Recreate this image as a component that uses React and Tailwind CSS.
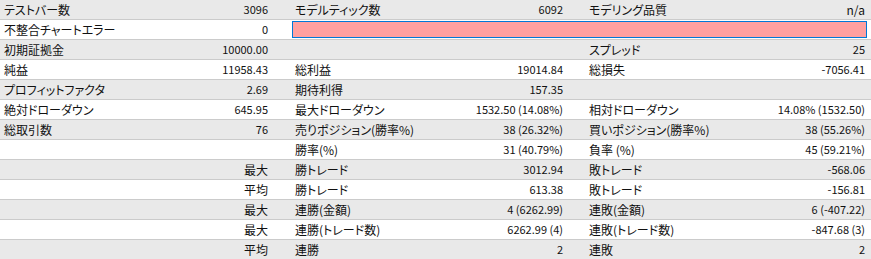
import React from "react";

const rows = [
  ["テストバー数", "3096", "モデルティック数", "6092", "モデリング品質", "n/a"],
  ["不整合チャートエラー", "0", null],
  ["初期証拠金", "10000.00", "", "", "スプレッド", "25"],
  ["純益", "11958.43", "総利益", "19014.84", "総損失", "-7056.41"],
  ["プロフィットファクタ", "2.69", "期待利得", "157.35", "", ""],
  ["絶対ドローダウン", "645.95", "最大ドローダウン", "1532.50 (14.08%)", "相対ドローダウン", "14.08% (1532.50)"],
  ["総取引数", "76", "売りポジション(勝率%)", "38 (26.32%)", "買いポジション(勝率%)", "38 (55.26%)"],
  ["", "", "勝率(%)", "31 (40.79%)", "負率 (%)", "45 (59.21%)"],
  ["", "最大", "勝トレード", "3012.94", "敗トレード", "-568.06"],
  ["", "平均", "勝トレード", "613.38", "敗トレード", "-156.81"],
  ["", "最大", "連勝(金額)", "4 (6262.99)", "連敗(金額)", "6 (-407.22)"],
  ["", "最大", "連勝(トレード数)", "6262.99 (4)", "連敗(トレード数)", "-847.68 (3)"],
  ["", "平均", "連勝", "2", "連敗", "2"],
];

function Pair({ label, value, className }) {
  return (
    <div className={`flex items-center justify-between whitespace-nowrap ${className}`}>
      <span className="[font-feature-settings:'palt']">{label}</span>
      <span className={/^[-\d]/.test(value) ? "text-[11px]" : "[font-feature-settings:'palt']"}>{value}</span>
    </div>
  );
}

export default function App() {
  return (
    <div
      className="w-[871px] h-[259px] overflow-hidden bg-white text-[12px] leading-none text-[#111]"
      style={{ fontFamily: '"Noto Sans CJK JP", sans-serif' }}
    >
      {rows.map((r, i) => (
        <div
          key={i}
          className={`grid grid-cols-[291px_294px_1fr] h-[20px] border-b border-[#cbcbcb] ${i % 2 === 0 ? "bg-[#e9e9e9]" : "bg-white"}`}
        >
          <Pair label={r[0]} value={r[1]} className="pl-[4px] pr-[23px]" />
          {r[2] === null ? (
            <div className="col-span-2 flex items-center pl-[1px] pr-[4px]">
              <div className="h-[17px] w-full bg-[#ffa0a0] border border-[#0078d7]" />
            </div>
          ) : (
            <>
              <Pair label={r[2]} value={r[3]} className="pl-[4px] pr-[22px]" />
              <Pair label={r[4]} value={r[5]} className="pl-[4px] pr-[6px]" />
            </>
          )}
        </div>
      ))}
    </div>
  );
}
